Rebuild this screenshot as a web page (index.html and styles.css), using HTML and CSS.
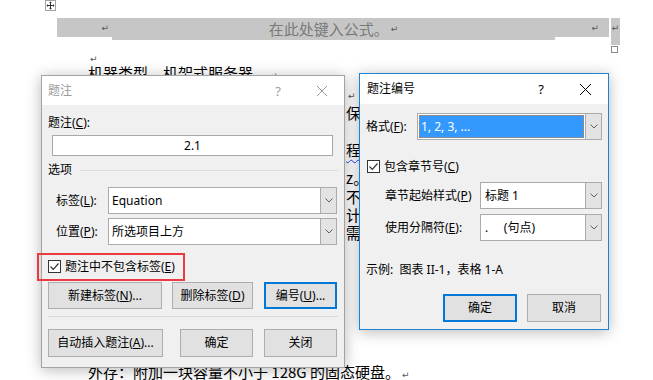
FILE: index.html
```
<!DOCTYPE html>
<html lang="zh-CN">
<head>
<meta charset="utf-8">
<title>题注</title>
<link rel="stylesheet" href="styles.css">
</head>
<body>
<div class="page">
  <div class="doc">
    <div class="anchor">
      <svg class="move-ico" width="11" height="11" viewBox="0 0 11 11">
        <rect x="0.5" y="0.5" width="10" height="10" fill="#fff" stroke="#a0a0a0"/>
        <path d="M5.5 2.5v6M2.5 5.5h6" stroke="#333" stroke-width="1"/>
        <path d="M5.5 1.5l-1.5 1.5h3zM5.5 9.5l-1.5-1.5h3zM1.5 5.5l1.5-1.5v3zM9.5 5.5l-1.5-1.5v3z" fill="#333"/>
      </svg>
    </div>
    <div class="eq-row">
      <div class="eq-a"><span class="pm">↵</span></div>
      <div class="eq-b"><span class="eq-text">在此处键入公式。</span><span class="pm">↵</span></div>
      <div class="eq-c"><span class="pm">↵</span></div>
      <div class="eq-d"><span class="pm">↵</span><span class="eq-sq"></span></div>
    </div>
    <p class="line h17"><span class="pm">↵</span></p>
    <p class="line h20">机器类型，机架式服务器。<span class="pm">↵</span></p>
    <p class="line h20"><span class="tail"><span class="pm">↵</span></span></p>
    <p class="line h37"><span class="tail">保证</span></p>
    <p class="line h28"><span class="tail"><span class="spell">程序</span></span></p>
    <p class="line h19"><span class="tail">z。</span></p>
    <p class="line h18"><span class="tail">不仅</span></p>
    <p class="line h18"><span class="tail">计数</span></p>
    <p class="line h139"><span class="tail">需要</span></p>
    <p class="line h18">外存：附加一块容量不小于 128G 的固态硬盘。<span class="pm">↵</span></p>
  </div>

  <div class="dialog dlg-caption">
    <div class="titlebar inactive">
      <span class="title">题注</span>
      <span class="tb-help">?</span>
      <svg class="tb-close" width="10" height="10" viewBox="0 0 10 10"><path d="M0 0L10 10M10 0L0 10" stroke="currentColor" stroke-width="1"/></svg>
    </div>
    <div class="dlg-body">
      <div class="lbl cap-lbl">题注(<u>C</u>):</div>
      <div class="textbox">2.1</div>
      <div class="group">选项</div>
      <div class="field f-label">
        <span class="f-name">标签(<u>L</u>):</span>
        <div class="combo c-wide"><span class="combo-val">Equation</span><span class="combo-btn"><svg width="8" height="5" viewBox="0 0 8 5"><path d="M0.5 0.5L4 4L7.5 0.5" fill="none" stroke="#606060"/></svg></span></div>
      </div>
      <div class="field f-pos">
        <span class="f-name">位置(<u>P</u>):</span>
        <div class="combo c-wide"><span class="combo-val">所选项目上方</span><span class="combo-btn"><svg width="8" height="5" viewBox="0 0 8 5"><path d="M0.5 0.5L4 4L7.5 0.5" fill="none" stroke="#606060"/></svg></span></div>
      </div>
      <div class="check-row cr-left">
        <span class="checkbox"><svg width="11" height="11" viewBox="0 0 11 11"><path d="M1.5 5.5L4.3 8.3L9.5 2.5" fill="none" stroke="#333" stroke-width="1.2"/></svg></span>
        <span>题注中不包含标签(<u>E</u>)</span>
      </div>
      <div class="btn-row br-top">
        <span class="btn w114">新建标签(<u>N</u>)...</span>
        <span class="btn w81">删除标签(<u>D</u>)</span>
        <span class="btn w73 default">编号(<u>U</u>)...</span>
      </div>
      <div class="sep"></div>
      <div class="btn-row br-bottom">
        <span class="btn w115">自动插入题注(<u>A</u>)...</span>
        <span class="btn w73">确定</span>
        <span class="btn w73">关闭</span>
      </div>
    </div>
  </div>

  <div class="callout"></div>

  <div class="dialog dlg-number">
    <div class="titlebar">
      <span class="title">题注编号</span>
      <span class="tb-help">?</span>
      <svg class="tb-close" width="11" height="11" viewBox="0 0 11 11"><path d="M0 0L11 11M11 0L0 11" stroke="currentColor" stroke-width="1"/></svg>
    </div>
    <div class="dlg-body">
      <div class="field f-format">
        <span class="f-name">格式(<u>F</u>):</span>
        <div class="combo c-format"><span class="combo-sel">1, 2, 3, ...</span><span class="combo-btn"><svg width="8" height="5" viewBox="0 0 8 5"><path d="M0.5 0.5L4 4L7.5 0.5" fill="none" stroke="#606060"/></svg></span></div>
      </div>
      <div class="check-row cr-right">
        <span class="checkbox"><svg width="11" height="11" viewBox="0 0 11 11"><path d="M1.5 5.5L4.3 8.3L9.5 2.5" fill="none" stroke="#333" stroke-width="1.2"/></svg></span>
        <span>包含章节号(<u>C</u>)</span>
      </div>
      <div class="field f-chap">
        <span class="f-name">章节起始样式(<u>P</u>)</span>
        <div class="combo c-narrow"><span class="combo-val">标题 1</span><span class="combo-btn"><svg width="8" height="5" viewBox="0 0 8 5"><path d="M0.5 0.5L4 4L7.5 0.5" fill="none" stroke="#606060"/></svg></span></div>
      </div>
      <div class="field f-sep">
        <span class="f-name">使用分隔符(<u>E</u>):</span>
        <div class="combo c-narrow"><span class="combo-val">.&nbsp;&nbsp;&nbsp;&nbsp;&nbsp;(句点)</span><span class="combo-btn"><svg width="8" height="5" viewBox="0 0 8 5"><path d="M0.5 0.5L4 4L7.5 0.5" fill="none" stroke="#606060"/></svg></span></div>
      </div>
      <div class="example">示例:&nbsp;&nbsp;图表 II-1，表格 1-A</div>
      <div class="btn-row br-right">
        <span class="btn w74 default">确定</span>
        <span class="btn w74">取消</span>
      </div>
    </div>
  </div>
</div>
</body>
</html>
```
FILE: styles.css
```
* { box-sizing: border-box; }
html, body { margin: 0; padding: 0; background: #fff; }
.page {
  position: relative;
  width: 653px;
  height: 380px;
  overflow: hidden;
  background: #fff;
}

/* ---------- document ---------- */
.doc {
  font-family: "Noto Sans CJK SC", sans-serif;
  font-size: 15px;
  color: #000;
}
.anchor { height: 11px; padding-left: 45px; }
.move-ico { display: block; }
.eq-row {
  display: flex;
  align-items: flex-start;
  margin: 7px 0 0 57px;
}
.eq-a, .eq-b, .eq-c, .eq-d { background: #c6c6c6; display: flex; align-items: center; }
.eq-a { width: 55px; height: 19px; justify-content: flex-end; padding-right: 3px; }
.eq-b { width: 443px; height: 22px; justify-content: center; color: #7a7a7a; font-size: 15px; line-height: 22px; }
.eq-c { width: 54px; height: 19px; justify-content: flex-end; padding-right: 10px; }
.eq-d { width: 9px; height: 27px; margin-left: 2px; position: relative; align-items: flex-start; padding-top: 5px; justify-content: center; }
.eq-sq {
  position: absolute;
  left: 0;
  top: 28px;
  width: 7px;
  height: 7px;
  border: 1px solid #8a8a8a;
  background: #fff;
}
.pm { font-family: "DejaVu Sans", sans-serif; font-size: 9px; color: #555; margin-left: 2px; }
.eq-a .pm, .eq-c .pm, .eq-d .pm { margin-left: 0; }

.line {
  margin: 0 0 0 88px;
  height: 18px;
  line-height: 18px;
  white-space: nowrap;
}
.h17 { margin-top: 2px; height: 17px; }
.h18 { height: 18px; }
.h19 { height: 19px; }
.h20 { height: 20px; }
.h28 { height: 28px; }
.h37 { height: 37px; }
.h139 { height: 139px; }
.tail { padding-left: 258px; }
.spell { text-decoration: underline wavy #2d3cf0; text-decoration-thickness: 1px; text-underline-offset: 3px; }

/* ---------- dialogs ---------- */
.dialog {
  position: absolute;
  background: #f0f0f0;
  display: flex;
  flex-direction: column;
  font-family: "Noto Sans", "Noto Sans CJK SC", sans-serif;
  font-size: 12px;
  color: #000;
  box-shadow: 0 2px 14px rgba(0, 0, 0, 0.28);
}
.dlg-caption {
  left: 41px;
  top: 75px;
  width: 304px;
  height: 293px;
  border: 1px solid #a3a3a3;
}
.dlg-number {
  left: 359px;
  top: 73px;
  width: 250px;
  height: 257px;
  border: 1px solid #1883d7;
}
.titlebar {
  height: 29px;
  flex: none;
  background: #fff;
  display: flex;
  align-items: center;
  padding: 0 17px 0 6px;
  color: #000;
}
.dlg-number .titlebar { height: 30px; padding-left: 7px; }
.titlebar.inactive { color: #9b9b9b; }
.title { flex: 1; font-size: 12px; line-height: 16px; }
.tb-help { font-family: "Noto Sans", sans-serif; font-size: 13px; line-height: 16px; margin-right: 36px; }
.tb-close { display: block; color: inherit; }

.dlg-body { display: flex; flex-direction: column; }
.lbl { line-height: 16px; }
.cap-lbl { margin: 10px 0 0 6px; }
.textbox {
  margin: 4px 0 0 10px;
  width: 281px;
  height: 21px;
  border: 1px solid #a8a8a8;
  background: #fff;
  text-align: center;
  line-height: 19px;
}
.group {
  margin: 6px 6px 0 6px;
  display: flex;
  align-items: center;
  line-height: 16px;
}
.group::after {
  content: "";
  flex: 1;
  height: 1px;
  background: #dcdcdc;
  margin-left: 8px;
}

.field { display: flex; align-items: center; height: 27px; }
.f-name { line-height: 16px; white-space: nowrap; }
.f-label { margin-top: 9px; }
.f-pos { margin-top: 4px; }
.f-label .f-name, .f-pos .f-name { width: 66px; padding-left: 14px; }

.combo {
  display: flex;
  height: 27px;
  border: 1px solid #ababab;
  background: #fff;
}
.c-wide { width: 229px; }
.c-format { width: 185px; }
.c-narrow { width: 122px; }
.combo-val { flex: 1; padding-left: 3px; line-height: 25px; white-space: nowrap; overflow: hidden; }
.combo-sel {
  flex: 1;
  margin: 1px 1px 1px 1px;
  background: #3399ff;
  color: #fff;
  outline: 1px dotted #e07d2a;
  outline-offset: -1px;
  padding-left: 2px;
  line-height: 23px;
  white-space: nowrap;
}
.combo-btn {
  width: 16px;
  flex: none;
  background: #e3e3e3;
  border-left: 1px solid #ababab;
  display: flex;
  align-items: center;
  justify-content: center;
}
.combo-btn svg { display: block; }

.check-row { display: flex; align-items: center; height: 13px; line-height: 16px; }
.checkbox {
  width: 13px;
  height: 13px;
  border: 1px solid #333;
  background: #fff;
  display: flex;
  align-items: center;
  justify-content: center;
  margin-right: 4px;
  flex: none;
}
.checkbox svg { display: block; }
.cr-left { margin: 15px 0 0 6px; }
.cr-right { margin: 20px 0 0 7px; }

.btn-row { display: flex; }
.btn {
  height: 27px;
  border: 1px solid #adadad;
  background: #e1e1e1;
  display: flex;
  align-items: center;
  justify-content: center;
  white-space: nowrap;
  line-height: 16px;
}
.btn.default { border: 2px solid #0078d7; }
.w114 { width: 114px; }
.w115 { width: 115px; }
.w81 { width: 81px; }
.w73 { width: 73px; }
.w74 { width: 74px; height: 28px; }
.br-top { margin: 9px 0 0 6px; gap: 10px; }
.br-top .w73 { margin-left: 1px; }
.sep { margin: 7px 6px 0 6px; height: 1px; background: #dadada; }
.br-bottom { margin: 12px 0 0 6px; }
.br-bottom .btn { height: 28px; }
.br-bottom .w115 + .w73 { margin-left: 17px; }
.br-bottom .w73 + .w73 { margin-left: 11px; }

.f-format { margin-top: 9px; }
.f-format .f-name { width: 57px; padding-left: 6px; }
.f-chap { margin-top: 9px; }
.f-sep { margin-top: 5px; }
.f-chap .f-name, .f-sep .f-name { width: 120px; padding-left: 25px; }
.f-chap .combo-val, .f-sep .combo-val { padding-left: 4px; }
.example { margin: 21px 0 0 6px; line-height: 16px; }
.br-right { margin: 16px 7px 0 0; justify-content: flex-end; gap: 10px; }

.callout {
  position: absolute;
  left: 37px;
  top: 253px;
  width: 148px;
  height: 28px;
  border: 2px solid #ec3b40;
}
```
